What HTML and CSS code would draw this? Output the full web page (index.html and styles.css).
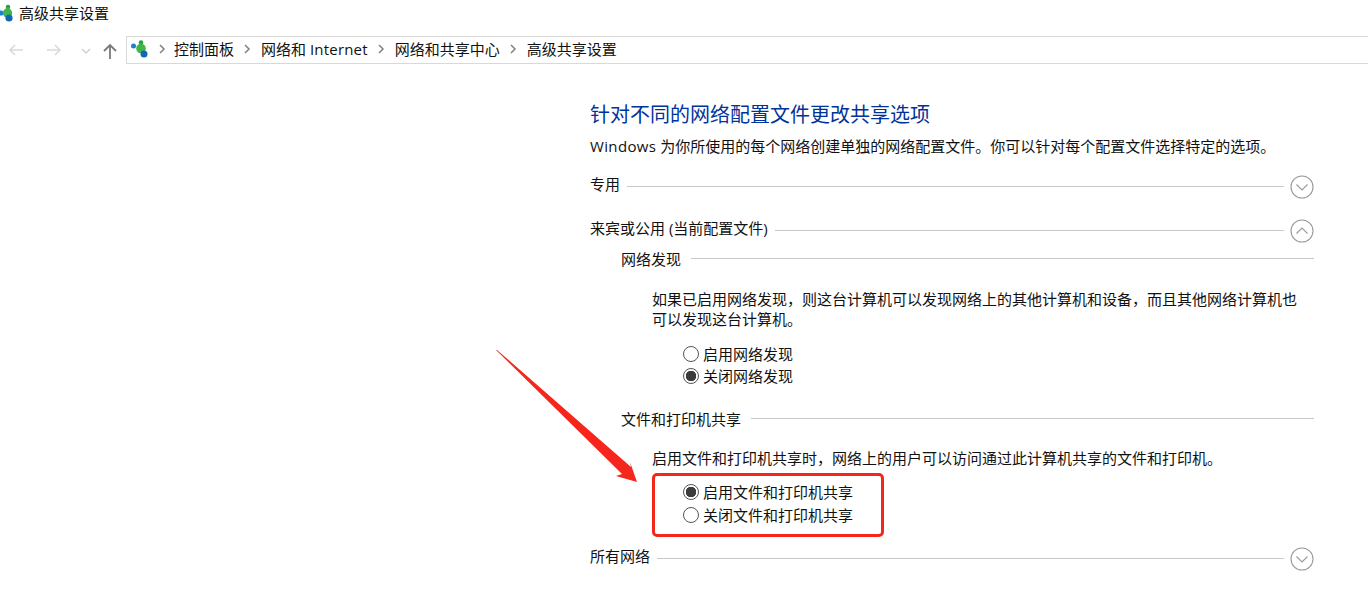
FILE: index.html

```html
<!DOCTYPE html>
<html lang="zh-CN">
<head>
  <meta charset="UTF-8">
  <title>高级共享设置</title>
  <link rel="stylesheet" href="styles.css">
</head>
<body>
  <div class="title-bar">
    <svg class="title-icon" viewBox="0 0 14 18">
      <circle cx="1" cy="9" r="2.6" fill="#1e7fd0"/>
      <circle cx="8" cy="3" r="2.300" fill="#2e9e4a"/>
      <circle cx="7.500" cy="9" r="4.700" fill="#3fb54a"/>
      <circle cx="9" cy="14" r="3.600" fill="#1565b5"/>
    </svg>
    <span>高级共享设置</span>
  </div>

  <div class="nav-bar">
    <div class="nav-buttons">
      <svg class="nav-btn" viewBox="0 0 16 16"><path d="M15 8H2M7 3L2 8l5 5" stroke="#d9d9d9"/></svg>
      <svg class="nav-btn" viewBox="0 0 16 16"><path d="M1 8h13M9 3l5 5-5 5" stroke="#d9d9d9"/></svg>
      <svg class="nav-drop" viewBox="0 0 10 10"><path d="M1 3l4 4 4-4" stroke="#d0d0d0"/></svg>
      <svg class="nav-up" viewBox="0 0 14 16"><path d="M7 16V2M1 8l6-6 6 6" stroke="#7a7a7a"/></svg>
    </div>
    <div class="address-box">
      <svg class="net-icon" viewBox="0 0 18 18">
        <circle cx="2.500" cy="6" r="2.500" fill="#1e7fd0"/>
        <circle cx="10" cy="2.500" r="2.300" fill="#2e9e4a"/>
        <circle cx="10" cy="8.500" r="4.800" fill="#3fb54a"/>
        <circle cx="13" cy="14" r="3.500" fill="#1565b5"/>
      </svg>
      <svg class="crumb-sep crumb-first" viewBox="0 0 8 10"><path d="M2 1l4 4-4 4"/></svg>
      <span>控制面板</span>
      <svg class="crumb-sep" viewBox="0 0 8 10"><path d="M2 1l4 4-4 4"/></svg>
      <span>网络和 <span class="latin-tight">Internet</span></span>
      <svg class="crumb-sep" viewBox="0 0 8 10"><path d="M2 1l4 4-4 4"/></svg>
      <span>网络和共享中心</span>
      <svg class="crumb-sep" viewBox="0 0 8 10"><path d="M2 1l4 4-4 4"/></svg>
      <span>高级共享设置</span>
    </div>
  </div>

  <div class="content">
    <h1>针对不同的网络配置文件更改共享选项</h1>
    <p class="intro"><span class="latin">Windows</span> 为你所使用的每个网络创建单独的网络配置文件。你可以针对每个配置文件选择特定的选项。</p>

    <div class="section-row first-row">
      <span>专用</span>
      <i class="rule"></i>
      <svg class="toggle" viewBox="0 0 24 24"><circle cx="12" cy="12" r="11"/><path d="M6.500 9.500L12 15l5.500-5.500"/></svg>
    </div>

    <div class="section-row guest-row">
      <span>来宾或公用 (当前配置文件)</span>
      <i class="rule"></i>
      <svg class="toggle" viewBox="0 0 24 24"><circle cx="12" cy="12" r="11"/><path d="M6.500 14.500L12 9l5.500 5.500"/></svg>
    </div>

    <div class="sub-section">
      <div class="sub-head"><span>网络发现</span><i class="rule"></i></div>
      <p class="sub-text discovery-text">如果已启用网络发现，则这台计算机可以发现网络上的其他计算机和设备，而且其他网络计算机也可以发现这台计算机。</p>
      <div class="radio-group discovery-radios">
        <div class="radio"><i class="dot"></i>启用网络发现</div>
        <div class="radio"><i class="dot on"></i>关闭网络发现</div>
      </div>

      <div class="sub-head sharing-head"><span>文件和打印机共享</span><i class="rule"></i></div>
      <p class="sub-text sharing-text">启用文件和打印机共享时，网络上的用户可以访问通过此计算机共享的文件和打印机。</p>
      <div class="radio-group sharing-radios">
        <div class="radio"><i class="dot on"></i>启用文件和打印机共享</div>
        <div class="radio"><i class="dot"></i>关闭文件和打印机共享</div>
      </div>
    </div>

    <div class="section-row all-row">
      <span>所有网络</span>
      <i class="rule"></i>
      <svg class="toggle" viewBox="0 0 24 24"><circle cx="12" cy="12" r="11"/><path d="M6.500 9.500L12 15l5.500-5.500"/></svg>
    </div>
  </div>

  <!-- red markup drawn on top of the screenshot -->
  <svg class="markup-arrow" viewBox="0 0 160 140">
    <polygon points="0,0 1,0 135,117 134,112 141,132 120,126 126,124"/>
  </svg>
  <div class="markup-box"></div>
</body>
</html>
```

FILE: styles.css

```css
* {
  box-sizing: border-box;
}

html, body {
  height: 597px;
  overflow: hidden;
}

body {
  margin: 0;
  background: #fff;
  color: #111;
  font-family: "Open Sans", "Noto Sans CJK SC", sans-serif;
  font-size: 15px;
  line-height: 20px;
  position: relative;
}

h1, p {
  margin: 0;
  font-weight: normal;
}

.latin {
  letter-spacing: 0.35px;
}

.latin-tight {
  letter-spacing: 0.2px;
}

.title-bar {
  height: 36px;
  padding-top: 4px;
  display: flex;
  align-items: flex-start;
}

.title-bar span {
  margin-top: -1px;
}

.title-icon {
  width: 14px;
  height: 18px;
  margin-right: 5px;
}

.nav-bar {
  height: 28px;
  display: flex;
}

.nav-buttons {
  width: 126px;
  display: flex;
  align-items: center;
  padding-left: 8px;
}

.nav-buttons svg {
  fill: none;
  stroke-width: 1.5;
}

.nav-btn {
  width: 16px;
  height: 16px;
  margin-right: 22px;
}

.nav-drop {
  width: 10px;
  height: 10px;
  margin: 2px 0 0 -3px;
}

.nav-buttons .nav-up {
  width: 14px;
  height: 16px;
  margin: 2px 0 0 12px;
  stroke-width: 1.8;
}

.address-box {
  flex: 1;
  border: 1px solid #d9d9d9;
  border-right: none;
  display: flex;
  align-items: center;
  padding: 0 0 2px 4px;
}

.net-icon {
  width: 18px;
  height: 18px;
}

.crumb-sep {
  width: 8px;
  height: 10px;
  margin: 0 10px 0 9px;
  fill: none;
  stroke: #808080;
  stroke-width: 1.5;
}

.crumb-sep.crumb-first {
  margin-right: 8px;
}

.content {
  margin-left: 590px;
  width: 724px;
}

h1 {
  margin-top: 39px;
  color: #003399;
  font-size: 20px;
  line-height: 24px;
}

.intro {
  margin-top: 9px;
  white-space: nowrap;
}

.section-row {
  display: flex;
  align-items: center;
  height: 24px;
}

.section-row span {
  margin-bottom: 4px;
}

.first-row {
  margin-top: 18px;
}

.guest-row {
  margin-top: 20px;
}

.all-row {
  margin-top: 20px;
}

.rule {
  flex: 1;
  height: 1px;
  background: #c8c8c8;
  margin-left: 7px;
}

.toggle {
  width: 24px;
  height: 24px;
  margin: 2px 0 0 6px;
  flex: none;
  fill: none;
  stroke: #9a9a9a;
  stroke-width: 1.1;
}

.sub-section {
  margin-left: 31px;
}

.sub-head {
  display: flex;
  align-items: center;
  height: 20px;
  margin-top: 7px;
}

.sub-head .rule {
  margin: 0 0 2px 10px;
}

.sub-text {
  margin-left: 31px;
}

.discovery-text {
  margin-top: 20px;
  width: 650px;
}

.sharing-text {
  margin-top: 19px;
}

.radio-group {
  margin-left: 31px;
}

.radio {
  display: flex;
  align-items: center;
  height: 22px;
  padding-left: 31px;
}

.sharing-radios .radio + .radio {
  margin-top: 1px;
}

.discovery-radios {
  margin-top: 14px;
}

.sharing-radios {
  margin-top: 13px;
}

.sharing-head {
  margin-top: 22px;
}

.dot {
  width: 16px;
  height: 16px;
  margin-right: 4px;
  border: 1px solid #555;
  border-radius: 50%;
  background: #fff;
  flex: none;
}

.dot.on {
  background: radial-gradient(circle, #3c3c3c 0 5px, #fff 5.5px);
}

.markup-arrow {
  position: absolute;
  left: 496px;
  top: 350px;
  width: 160px;
  height: 140px;
}

.markup-arrow polygon {
  fill: #f5261b;
}

.markup-box {
  position: absolute;
  left: 652px;
  top: 473px;
  width: 232px;
  height: 64px;
  border: 3px solid #f5261b;
  border-radius: 5px;
}
```
